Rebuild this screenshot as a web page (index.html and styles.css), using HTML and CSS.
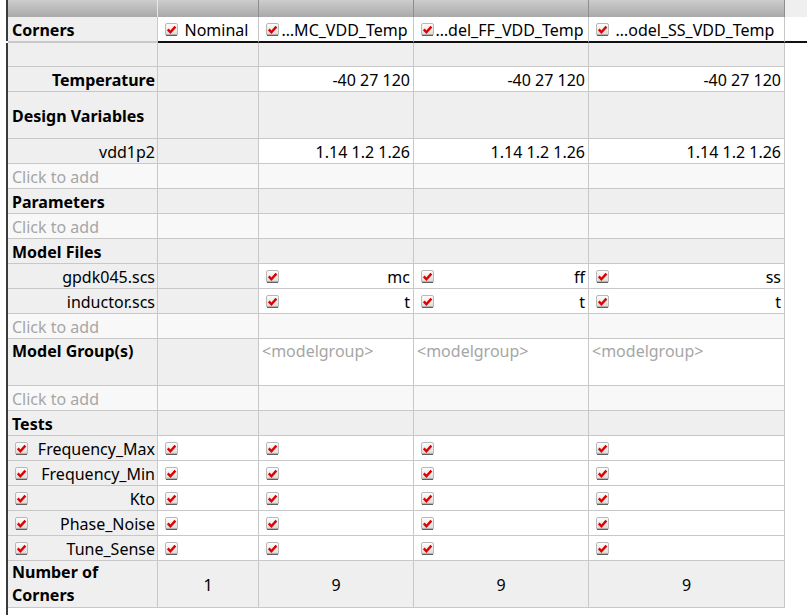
FILE: index.html
```html
<!DOCTYPE html>
<html>
<head>
<meta charset="utf-8">
<link rel="stylesheet" href="styles.css">
</head>
<body>
<svg width="0" height="0" class="defs">
  <defs>
    <linearGradient id="cbg" x1="0" y1="0" x2="0" y2="1">
      <stop offset="0" stop-color="#ffffff"/>
      <stop offset="1" stop-color="#d8d8d8"/>
    </linearGradient>
    <symbol id="cb" viewBox="0 0 13 13">
      <rect x="0.5" y="0.5" width="12" height="12" rx="1.5" fill="url(#cbg)" stroke="#b8b8b8"/>
      <line x1="1" y1="12.3" x2="12" y2="12.3" stroke="#555" stroke-width="1.2"/>
      <path d="M2.8 6.4 L5.4 9.2 L10.4 3.6" fill="none" stroke="#e00000" stroke-width="2.4" stroke-linejoin="miter"/>
    </symbol>
  </defs>
</svg>
<div class="page">
  <div class="gutter"><div class="vline vline-top"></div><div class="vline vline-bottom"></div></div>
  <div class="sheet">
    <div class="row hdr">
      <div class="c h h0"></div><div class="c h"></div><div class="c h"></div><div class="c h"></div><div class="c h"></div><div class="c hf"></div>
    </div>
    <div class="row corners">
      <div class="c lab b"><span>Corners</span></div>
      <div class="c w ch"><svg class="cbx"><use href="#cb"/></svg><span class="ct">Nominal</span></div>
      <div class="c w ch"><svg class="cbx"><use href="#cb"/></svg><span class="ct">…MC_VDD_Temp</span></div>
      <div class="c w ch"><svg class="cbx"><use href="#cb"/></svg><span class="ct">…del_FF_VDD_Temp</span></div>
      <div class="c w ch"><svg class="cbx"><use href="#cb"/></svg><span class="ct">…odel_SS_VDD_Temp</span></div>
      <div class="c fill"></div>
    </div>
    <div class="row empty">
      <div class="c lab"></div><div class="c g"></div><div class="c g"></div><div class="c g"></div><div class="c g"></div><div class="c blank"></div>
    </div>
    <div class="row">
      <div class="c lab b r"><span>Temperature</span></div>
      <div class="c g"></div>
      <div class="c w r">-40 27 120</div>
      <div class="c w r">-40 27 120</div>
      <div class="c w r">-40 27 120</div>
      <div class="c blank"></div>
    </div>
    <div class="row tall">
      <div class="c lab b"><span>Design Variables</span></div>
      <div class="c g"></div><div class="c g"></div><div class="c g"></div><div class="c g"></div><div class="c blank"></div>
    </div>
    <div class="row">
      <div class="c lab r"><span>vdd1p2</span></div>
      <div class="c g"></div>
      <div class="c w r">1.14 1.2 1.26</div>
      <div class="c w r">1.14 1.2 1.26</div>
      <div class="c w r">1.14 1.2 1.26</div>
      <div class="c blank"></div>
    </div>
    <div class="row">
      <div class="c lab add"><span>Click to add</span></div>
      <div class="c a"></div><div class="c a"></div><div class="c a"></div><div class="c a"></div><div class="c blank"></div>
    </div>
    <div class="row">
      <div class="c lab b"><span>Parameters</span></div>
      <div class="c g"></div><div class="c g"></div><div class="c g"></div><div class="c g"></div><div class="c blank"></div>
    </div>
    <div class="row">
      <div class="c lab add"><span>Click to add</span></div>
      <div class="c a"></div><div class="c a"></div><div class="c a"></div><div class="c a"></div><div class="c blank"></div>
    </div>
    <div class="row">
      <div class="c lab b"><span>Model Files</span></div>
      <div class="c g"></div><div class="c g"></div><div class="c g"></div><div class="c g"></div><div class="c blank"></div>
    </div>
    <div class="row">
      <div class="c lab r"><span>gpdk045.scs</span></div>
      <div class="c g"></div>
      <div class="c w cv"><svg class="cbx"><use href="#cb"/></svg><span>mc</span></div>
      <div class="c w cv"><svg class="cbx"><use href="#cb"/></svg><span>ff</span></div>
      <div class="c w cv"><svg class="cbx"><use href="#cb"/></svg><span>ss</span></div>
      <div class="c blank"></div>
    </div>
    <div class="row">
      <div class="c lab r"><span>inductor.scs</span></div>
      <div class="c g"></div>
      <div class="c w cv"><svg class="cbx"><use href="#cb"/></svg><span>t</span></div>
      <div class="c w cv"><svg class="cbx"><use href="#cb"/></svg><span>t</span></div>
      <div class="c w cv"><svg class="cbx"><use href="#cb"/></svg><span>t</span></div>
      <div class="c blank"></div>
    </div>
    <div class="row">
      <div class="c lab add"><span>Click to add</span></div>
      <div class="c a"></div><div class="c a"></div><div class="c a"></div><div class="c a"></div><div class="c blank"></div>
    </div>
    <div class="row tall">
      <div class="c lab b top"><span>Model Group(s)</span></div>
      <div class="c g"></div>
      <div class="c w top ph">&lt;modelgroup&gt;</div>
      <div class="c w top ph">&lt;modelgroup&gt;</div>
      <div class="c w top ph">&lt;modelgroup&gt;</div>
      <div class="c blank"></div>
    </div>
    <div class="row">
      <div class="c lab add"><span>Click to add</span></div>
      <div class="c a"></div><div class="c a"></div><div class="c a"></div><div class="c a"></div><div class="c blank"></div>
    </div>
    <div class="row">
      <div class="c lab b"><span>Tests</span></div>
      <div class="c g"></div><div class="c g"></div><div class="c g"></div><div class="c g"></div><div class="c blank"></div>
    </div>
    <div class="row">
      <div class="c lab cv"><svg class="cbx"><use href="#cb"/></svg><span>Frequency_Max</span></div>
      <div class="c w"><svg class="cbx"><use href="#cb"/></svg></div>
      <div class="c w"><svg class="cbx"><use href="#cb"/></svg></div>
      <div class="c w"><svg class="cbx"><use href="#cb"/></svg></div>
      <div class="c w"><svg class="cbx"><use href="#cb"/></svg></div>
      <div class="c blank"></div>
    </div>
    <div class="row">
      <div class="c lab cv"><svg class="cbx"><use href="#cb"/></svg><span>Frequency_Min</span></div>
      <div class="c w"><svg class="cbx"><use href="#cb"/></svg></div>
      <div class="c w"><svg class="cbx"><use href="#cb"/></svg></div>
      <div class="c w"><svg class="cbx"><use href="#cb"/></svg></div>
      <div class="c w"><svg class="cbx"><use href="#cb"/></svg></div>
      <div class="c blank"></div>
    </div>
    <div class="row">
      <div class="c lab cv"><svg class="cbx"><use href="#cb"/></svg><span>Kto</span></div>
      <div class="c w"><svg class="cbx"><use href="#cb"/></svg></div>
      <div class="c w"><svg class="cbx"><use href="#cb"/></svg></div>
      <div class="c w"><svg class="cbx"><use href="#cb"/></svg></div>
      <div class="c w"><svg class="cbx"><use href="#cb"/></svg></div>
      <div class="c blank"></div>
    </div>
    <div class="row">
      <div class="c lab cv"><svg class="cbx"><use href="#cb"/></svg><span>Phase_Noise</span></div>
      <div class="c w"><svg class="cbx"><use href="#cb"/></svg></div>
      <div class="c w"><svg class="cbx"><use href="#cb"/></svg></div>
      <div class="c w"><svg class="cbx"><use href="#cb"/></svg></div>
      <div class="c w"><svg class="cbx"><use href="#cb"/></svg></div>
      <div class="c blank"></div>
    </div>
    <div class="row">
      <div class="c lab cv"><svg class="cbx"><use href="#cb"/></svg><span>Tune_Sense</span></div>
      <div class="c w"><svg class="cbx"><use href="#cb"/></svg></div>
      <div class="c w"><svg class="cbx"><use href="#cb"/></svg></div>
      <div class="c w"><svg class="cbx"><use href="#cb"/></svg></div>
      <div class="c w"><svg class="cbx"><use href="#cb"/></svg></div>
      <div class="c blank"></div>
    </div>
    <div class="row tall">
      <div class="c lab b top two"><span>Number of Corners</span></div>
      <div class="c g ctr">1</div>
      <div class="c g ctr">9</div>
      <div class="c g ctr">9</div>
      <div class="c g ctr">9</div>
      <div class="c blank"></div>
    </div>
  </div>
</div>
</body>
</html>
```

FILE: styles.css
```css
html, body {
  margin: 0;
  padding: 0;
  background: #ffffff;
}
.defs {
  position: absolute;
  width: 0;
  height: 0;
}
.page {
  display: flex;
  width: 807px;
  height: 615px;
  overflow: hidden;
  font-family: "Noto Sans", "Open Sans", sans-serif;
  font-size: 16px;
  color: #000;
}
.gutter {
  width: 8px;
  flex: none;
  display: flex;
  flex-direction: column;
  align-items: flex-end;
}
.vline {
  width: 2px;
  background: #3a3a3a;
}
.vline-top {
  height: 41px;
}
.vline-bottom {
  margin-top: 2px;
  flex: 1;
}
.sheet {
  flex: 1;
  display: grid;
  grid-template-columns: 150px 101px 155px 175px 196px 1fr;
  align-content: start;
}
.row {
  display: contents;
}
.c {
  box-sizing: border-box;
  height: 25px;
  border-right: 1px solid #c8c8c8;
  border-bottom: 1px solid #c8c8c8;
  display: flex;
  align-items: center;
  padding: 1px 3px 0;
  white-space: nowrap;
  overflow: hidden;
}
.tall > .c {
  height: 47px;
}
.hdr > .c {
  height: 17px;
  border-bottom: none;
}
.corners > .c {
  height: 26px;
  border-bottom: 2px solid #111;
}
.corners > .lab {
  border-bottom: 2px solid #c8c8c8;
}
.empty > .c {
  height: 24px;
}
.h {
  background: linear-gradient(#cdcdcd, #a9a9a9);
  border-right: 1px solid #8e8e8e;
}
.h0 {
  border-right: 1px solid #e6e6e6;
}
.hf {
  background: #efefef;
  border: none;
}
.fill {
  background: #fff;
  border-right: none;
}
.blank {
  border: none !important;
  background: #fff;
}
.lab {
  background: #efefef;
  padding: 1px 2px 0 4px;
}
.g {
  background: #efefef;
}
.w {
  background: #fff;
}
.a {
  background: #f8f8f8;
}
.lab.add {
  background: #f8f8f8;
  color: #a6a6a6;
}
.b {
  font-weight: bold;
}
.r {
  justify-content: flex-end;
}
.top {
  align-items: flex-start;
  padding-top: 1px;
}
.ph {
  color: #a6a6a6;
}
.ctr {
  justify-content: center;
}
.two {
  white-space: normal;
  line-height: 23px;
  padding-top: 0;
}
.cbx {
  width: 13px;
  height: 13px;
  flex: none;
  margin-left: 4px;
}
.lab .cbx {
  margin-left: 3px;
}
.ch .ct {
  flex: 1;
  text-align: center;
}
.cv {
  justify-content: space-between;
}
```
